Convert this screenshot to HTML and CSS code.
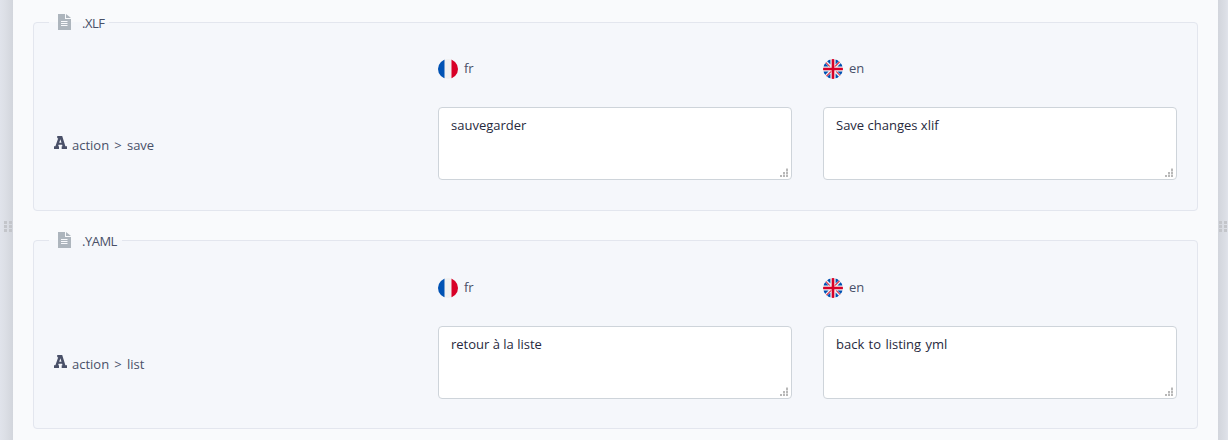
FILE: index.html
```
<!DOCTYPE html>
<html lang="en">
<head>
<meta charset="utf-8">
<title>Translations</title>
<link rel="stylesheet" href="styles.css">
</head>
<body>
<svg class="defs" width="0" height="0" aria-hidden="true">
  <defs>
    <clipPath id="round"><circle cx="10" cy="10" r="10"/></clipPath>
    <symbol id="flag-fr" viewBox="0 0 20 20"><g clip-path="url(#round)"><path fill="#f0f0f0" d="M0 0h20v20H0z"/><path fill="#0052b4" d="M0 0h6.5v20H0z"/><path fill="#d80027" d="M13.5 0H20v20h-6.5z"/></g></symbol>
    <symbol id="flag-en" viewBox="0 0 20 20"><g clip-path="url(#round)"><path fill="#f0f0f0" d="M0 0h20v20H0z"/><path fill="#0052b4" d="M2.07 3.91A10 10 0 0 0 .34 7.4h5.21zM19.66 7.4a10 10 0 0 0-1.73-3.49L14.45 7.4zM.34 12.6a10 10 0 0 0 1.73 3.49l3.48-3.49zM16.09 2.07A10 10 0 0 0 12.6.34v5.21zM3.91 17.93a10 10 0 0 0 3.49 1.73v-5.21zM7.4.34a10 10 0 0 0-3.49 1.73L7.4 5.55zM12.6 19.66a10 10 0 0 0 3.49-1.73l-3.49-3.48zM14.45 12.6l3.48 3.49a10 10 0 0 0 1.73-3.49z"/><path fill="#d80027" d="M8.7 0h2.6v8.7H20v2.6h-8.7V20H8.7v-8.7H0V8.7h8.7zM12.6 12.6l4.47 4.47.6-.57-3.87-3.9zM7.4 12.6l-4.47 4.47.6.6L8.6 12.6zM7.4 7.4 2.93 2.93l-.6.6L6.2 7.4zM12.6 7.4l4.47-4.47-.6-.6L11.4 7.4z"/></g></symbol>
    <symbol id="file" viewBox="0 0 13 16"><path fill="#adb5bd" d="M0 0h7v5h6v11H0zM8 0l5 4H8z"/><path stroke="#f8f9fc" d="M3 7.5h6.5M3 9.5h6.5M3 11.5h6.5"/></symbol>
    <symbol id="letter" viewBox="0 0 13 13"><path fill="#495068" fill-rule="evenodd" d="M3.2 0h5l3.2 10.3H13V13H7.7v-2.7h.8L8.1 8.8H4.6l-.4 1.5H5V13H0v-2.7h1.4L4.2 2.3h-1zM5.2 6.8h2.3L6.4 3.2z"/></symbol>
    <symbol id="grip" viewBox="0 0 8 11"><path fill="#c3c5ca" d="M0 0h3v3H0zM5 0h3v3H5zM0 4h3v3H0zM5 4h3v3H5zM0 8h3v3H0zM5 8h3v3H5z"/></symbol>
    <symbol id="resize" viewBox="0 0 8 9"><path fill="#b8b8b8" d="M0 7h2v2H0zM3 7h2v2H3zM6 7h2v2H6zM3 4h2v2H3zM6 4h2v2H6zM6 1h2v2H6z"/><path fill="#dedede" d="M3 6h2v1H3zM6 0h2v1H6zM6 3h2v1H6zM6 6h2v1H6z"/></symbol>
  </defs>
</svg>
<div class="layout">
  <div class="handle handle-left"><svg class="grip"><use href="#grip"/></svg></div>
  <main class="content">
    <fieldset class="group">
      <legend class="group-title"><svg class="file-icon"><use href="#file"/></svg><span>.XLF</span></legend>
      <div class="grid">
        <div></div>
        <div class="lang"><svg class="flag"><use href="#flag-fr"/></svg><span>fr</span></div>
        <div class="lang"><svg class="flag"><use href="#flag-en"/></svg><span>en</span></div>
        <div class="key"><svg class="letter"><use href="#letter"/></svg><span>action &gt; save</span></div>
        <div class="field"><span>sauvegarder</span><svg class="resize"><use href="#resize"/></svg></div>
        <div class="field"><span>Save changes xlif</span><svg class="resize"><use href="#resize"/></svg></div>
      </div>
    </fieldset>
    <fieldset class="group group-yaml">
      <legend class="group-title"><svg class="file-icon"><use href="#file"/></svg><span>.YAML</span></legend>
      <div class="grid">
        <div></div>
        <div class="lang"><svg class="flag"><use href="#flag-fr"/></svg><span>fr</span></div>
        <div class="lang"><svg class="flag"><use href="#flag-en"/></svg><span>en</span></div>
        <div class="key"><svg class="letter"><use href="#letter"/></svg><span>action &gt; list</span></div>
        <div class="field"><span>retour à la liste</span><svg class="resize"><use href="#resize"/></svg></div>
        <div class="field"><span class="spaced">back to listing yml</span><svg class="resize"><use href="#resize"/></svg></div>
      </div>
    </fieldset>
  </main>
  <div class="handle handle-right"><svg class="grip"><use href="#grip"/></svg></div>
</div>
</body>
</html>
```
FILE: styles.css
```
* { box-sizing: border-box; }
body { margin: 0; font: 13px/20px "Open Sans", "Noto Sans", sans-serif; color: #495068; background: #f9fafc; overflow: hidden; }
svg { display: block; flex: none; }
.defs { position: absolute; }
.layout { display: flex; height: 440px; }
.handle { display: flex; flex: none; padding-top: 221px; }
.handle-left { width: 13px; padding-left: 4px; background: linear-gradient(90deg, #e0e3eb 0, #dcdfe6 5px, #d2d5dc 13px); }
.handle-right { width: 10px; padding-left: 1px; background: linear-gradient(90deg, #d2d5dc 0, #dcdfe6 8px, #e0e3eb 10px); }
.grip { width: 8px; height: 11px; }
.content { flex: 1; padding: 12px 20px 0; }
.group { height: 199px; min-width: 0; margin: 0 0 19px; padding: 0 20px 0 19px; border: 1px solid #e3e6ee; border-radius: 4px; background: #f5f7fb; }
.group-title { display: flex; height: 21px; margin-left: -4px; padding: 0 5px 0 9px; gap: 11px; line-height: 23px; letter-spacing: -.5px; }
.file-icon { width: 13px; height: 16px; margin-top: 2px; }
.grid { display: grid; grid-template-columns: repeat(3, 354px); grid-template-rows: 20px 73px; gap: 28px 31px; padding-top: 26px; }
.group-yaml .grid { padding-top: 27px; }
.lang { display: flex; gap: 6px; line-height: 18px; }
.flag { width: 20px; height: 20px; }
.key { display: flex; align-items: center; gap: 5px; padding: 3px 0 0 1px; word-spacing: 1.8px; }
.letter { width: 13px; height: 13px; margin-bottom: 5px; }
.field { display: flex; justify-content: space-between; align-items: flex-end; padding: 7px 3px 2px 12px; border: 1px solid #ced4da; border-radius: 4px; background: #fff; color: #27293d; }
.field span { align-self: flex-start; }
.spaced { word-spacing: 1px; }
.resize { width: 8px; height: 9px; }
```
